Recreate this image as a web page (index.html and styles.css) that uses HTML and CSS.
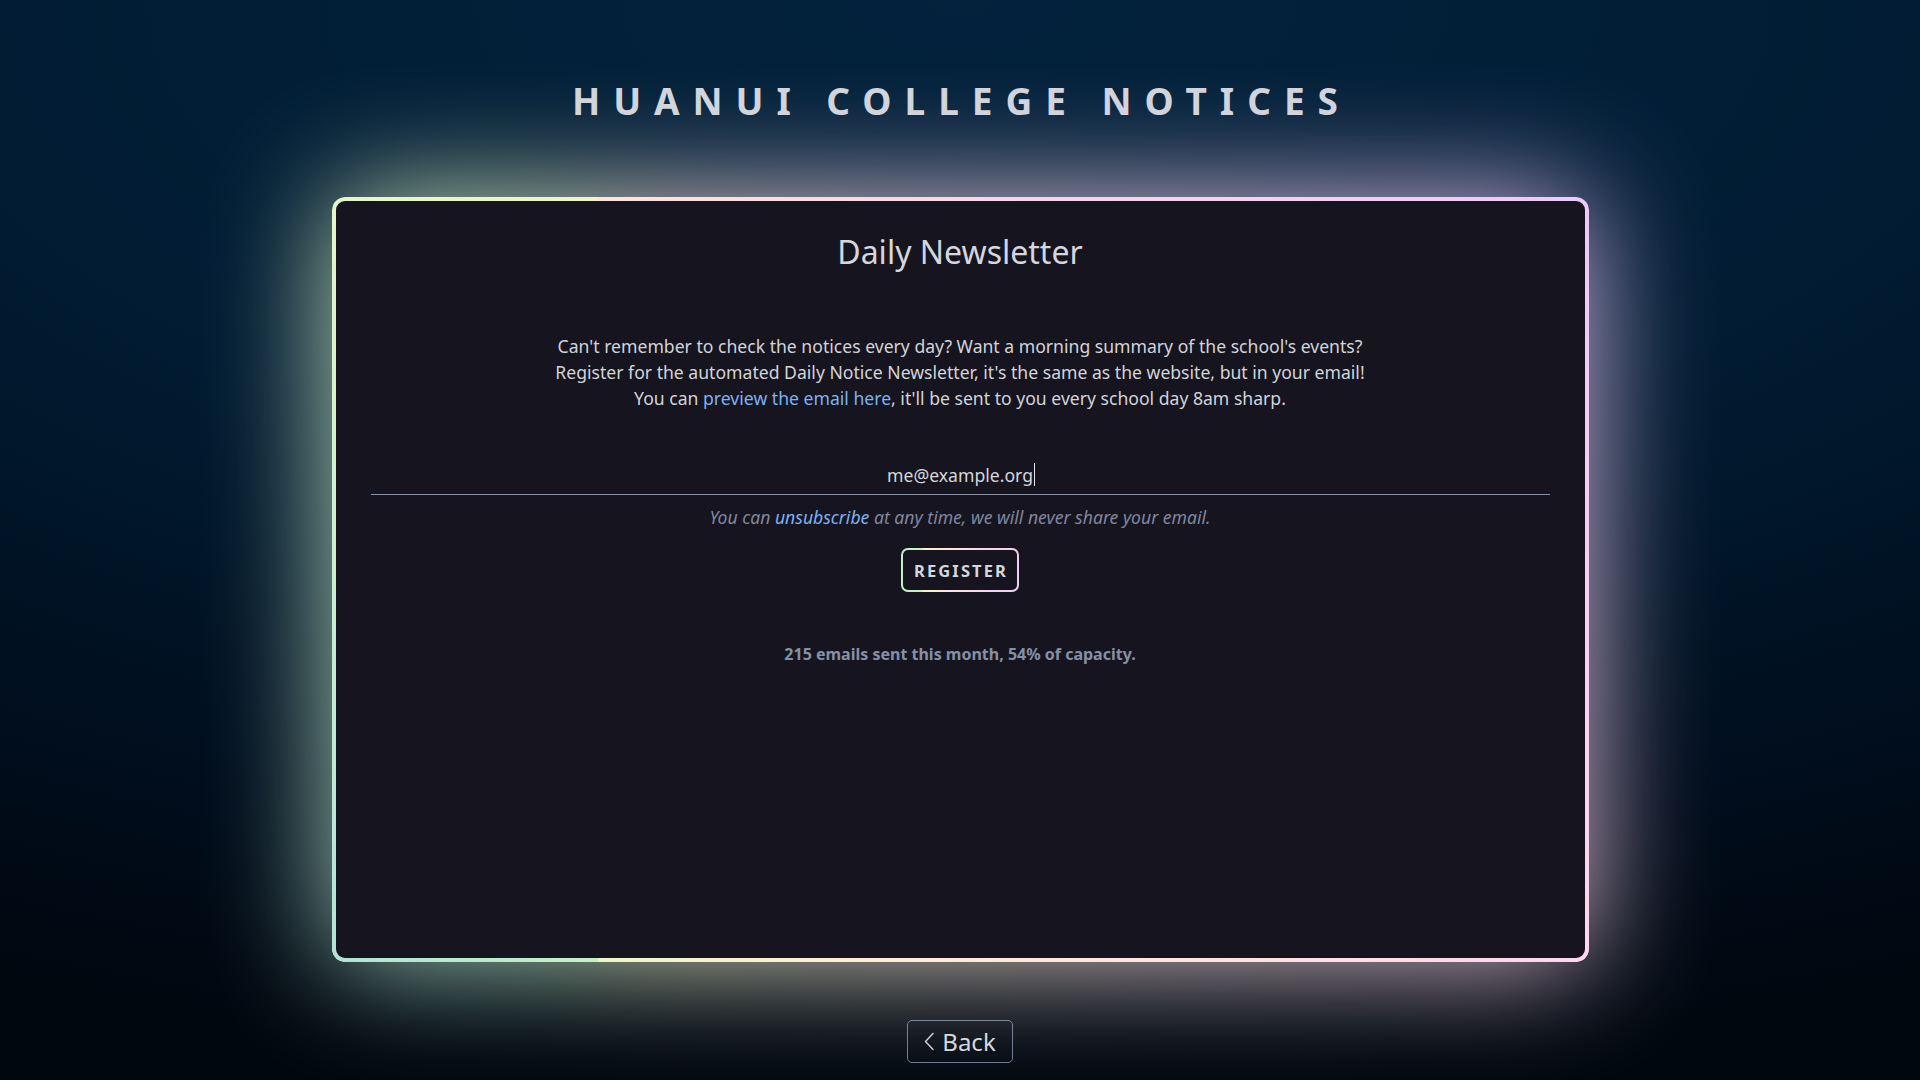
FILE: index.html
```html
<!DOCTYPE html>
<html lang="en">
<head>
<meta charset="utf-8">
<title>Huanui College Notices – Daily Newsletter</title>
<link rel="stylesheet" href="styles.css">
</head>
<body>
<main class="page">
  <h1 class="site-title">HUANUI COLLEGE NOTICES</h1>

  <section class="frame">
    <div class="glow" aria-hidden="true"><span class="tint tint-top"></span><span class="tint tint-bottom"></span></div>
    <div class="ring" aria-hidden="true"><span class="tint tint-top"></span><span class="tint tint-bottom"></span></div>
    <div class="card">
      <h2 class="card-title">Daily Newsletter</h2>
      <p class="intro">Can't remember to check the notices every day? Want a morning summary of the school's events?<br>Register for the automated Daily Notice Newsletter, it's the same as the website, but in your email!<br>You can <a href="#" class="link">preview the email here</a>, it'll be sent to you every school day 8am sharp.</p>
      <form class="signup">
        <div class="field">
          <input class="email" type="email" value="me@example.org" aria-label="Email address">
          <span class="caret" aria-hidden="true"></span>
        </div>
        <p class="hint">You can <a href="#" class="link link-strong">unsubscribe</a> at any time, we will never share your email.</p>
        <button type="button" class="register">REGISTER</button>
      </form>
      <p class="stats">215 emails sent this month, 54% of capacity.</p>
    </div>
  </section>

  <a href="#" class="back">
    <svg class="chev" width="12" height="19" viewBox="0 0 12 19" aria-hidden="true"><polyline points="10,1.5 2.5,9.5 10,17.5" fill="none" stroke="currentColor" stroke-width="1.5" stroke-linecap="round" stroke-linejoin="round"/></svg>
    <span>Back</span>
  </a>
</main>
</body>
</html>
```

FILE: styles.css
```css
* { box-sizing: border-box; }

html, body {
  margin: 0;
  height: 100%;
}

body {
  font-family: "Noto Sans", "Open Sans", sans-serif;
  color: #d0d4dc;
  background: radial-gradient(ellipse 120% 100% at 50% 0%, #03223d 0%, #011c33 45%, #000d1c 80%, #00070f 100%);
  overflow: hidden;
}

.page {
  min-height: 100vh;
  display: flex;
  flex-direction: column;
  align-items: center;
}

.site-title {
  margin: 76px 0 0;
  font-size: 37px;
  line-height: 50px;
  font-weight: 700;
  letter-spacing: 0.35em;
  padding-left: 3px;
  color: #cfd4dc;
}

.frame {
  position: relative;
  margin-top: 71px;
  width: 1257px;
  height: 765px;
  padding: 4px;
}

.glow, .ring {
  position: absolute;
  inset: 0;
  border-radius: 13px;
}

.glow {
  filter: blur(60px);
  opacity: 0.88;
}

.ring { overflow: hidden; }

.tint {
  position: absolute;
  inset: 0;
  border-radius: inherit;
}

.tint-top {
  background: linear-gradient(90deg, #e2f8c6 0%, #eef6c6 18%, #f4f2c8 21.1%, #fde4da 21.3%, #fadae4 40%, #f6d2ee 70%, #eec8fa 100%);
}

.tint-bottom {
  background: linear-gradient(90deg, #b2e2d6 0%, #bcecca 15%, #c4f2c6 21.1%, #eef5c8 21.3%, #fdf0d4 40%, #ffe2e0 70%, #ffd6ee 100%);
  -webkit-mask-image: linear-gradient(to bottom, transparent 0%, #000 100%);
  mask-image: linear-gradient(to bottom, transparent 0%, #000 100%);
}

.card {
  position: relative;
  height: 100%;
  border-radius: 9px;
  background: #16151f;
  padding: 29px 35px 0;
  display: flex;
  flex-direction: column;
  align-items: center;
  text-align: center;
}

.card-title {
  margin: 0;
  font-size: 32px;
  line-height: 44px;
  font-weight: 400;
  color: #d4d7de;
}

.intro {
  margin: 59px 0 0;
  font-size: 17.6px;
  line-height: 26px;
  color: #d2d4da;
}

.link {
  color: #7cb2f2;
  text-decoration: none;
}

.signup {
  margin-top: 44px;
  width: 100%;
  display: flex;
  flex-direction: column;
  align-items: center;
}

.field {
  position: relative;
  width: 100%;
}

.email {
  display: block;
  width: 100%;
  height: 40px;
  border: 0;
  border-bottom: 1px solid #8a91a2;
  background: transparent;
  color: #d4d7de;
  font-family: inherit;
  font-size: 17.6px;
  text-align: center;
  outline: none;
  padding: 0;
}

.caret {
  position: absolute;
  left: calc(50% + 74px);
  top: 8px;
  width: 1px;
  height: 23px;
  background: #e4e6ec;
}

.hint {
  margin: 10px 0 0;
  font-size: 17.6px;
  line-height: 24px;
  font-style: italic;
  color: #80879e;
}

.link-strong { color: #7cb2f2; }

.register {
  margin-top: 19px;
  height: 44px;
  padding: 0 9px 0 11px;
  border: 2px solid transparent;
  border-radius: 7px;
  background:
    linear-gradient(#16151f, #16151f) padding-box,
    linear-gradient(90deg, #c2f0c6 0%, #c6f2c8 17%, #f4f4c8 20%, #fde6dc 40%, #f8d6ec 70%, #f4ccf6 100%) border-box;
  color: #d4d7de;
  font-family: inherit;
  font-size: 16.5px;
  font-weight: 700;
  letter-spacing: 2.1px;
  cursor: pointer;
}

.stats {
  margin: 51px 0 0;
  font-size: 16px;
  line-height: 22px;
  font-weight: 700;
  color: #8590a6;
}

.back {
  margin-top: 58px;
  height: 43px;
  padding: 0 16px 0 15px;
  display: inline-flex;
  align-items: center;
  gap: 7px;
  border: 1px solid #6b7890;
  border-radius: 5px;
  color: #d4d7de;
  text-decoration: none;
  font-size: 24px;
  line-height: 1;
}

.chev { display: block; color: #c8ccd4; }
```
